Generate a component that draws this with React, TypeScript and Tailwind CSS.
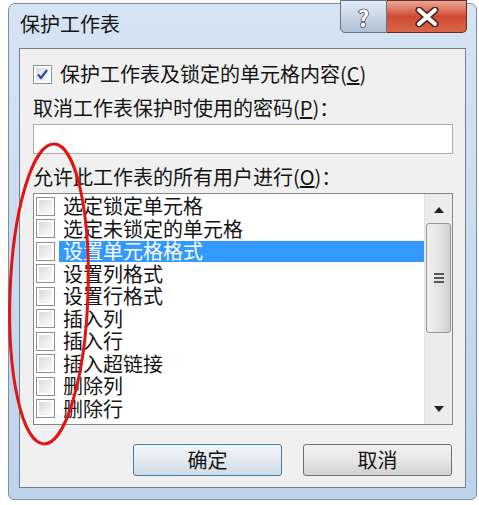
import React from 'react';

const items = [
  '选定锁定单元格',
  '选定未锁定的单元格',
  '设置单元格格式',
  '设置列格式',
  '设置行格式',
  '插入列',
  '插入行',
  '插入超链接',
  '删除列',
  '删除行',
];

const Box: React.FC<{ checked?: boolean }> = ({ checked }) => (
  <div className="w-[19px] h-[19px] shrink-0 border border-[#8e8f8f] bg-white p-[2px]">
    <div className="w-full h-full bg-gradient-to-br from-[#d9d9d9] via-[#ececec] to-[#fbfbfb] flex items-center justify-center">
      {checked && (
        <svg width="13" height="13" viewBox="0 0 13 13">
          <path d="M2 6.5 L5 10 L11 2" fill="none" stroke="#2a4f9a" strokeWidth="2.2" />
        </svg>
      )}
    </div>
  </div>
);

export default function App() {
  return (
    <div
      className="relative w-[479px] h-[505px] bg-white overflow-hidden text-[#141414]"
      style={{ fontFamily: '"Noto Sans CJK SC", "Liberation Sans", sans-serif' }}
    >
      <div className="ml-[8px] mt-[3px] w-[469px] h-[497px] rounded-t-[7px] rounded-b-[6px] border border-[#7b8ea3] bg-gradient-to-b from-[#d6e4f3] via-[#c9dcef] to-[#bdd3ea] flex flex-col">
        {/* title bar */}
        <div className="h-[44px] flex items-start">
          <div className="pl-[11px] pt-[6px] text-[20px] leading-[28px]">保护工作表</div>
          <div className="ml-auto mr-[9px] -mt-[4px] flex">
            <div className="w-[47px] h-[33px] rounded-bl-[5px] border border-[#5f7691] bg-gradient-to-b from-[#e3ebf4] via-[#c9d6e5] to-[#aebfd3] flex items-center justify-center">
              <span className="text-[22px] font-bold leading-none text-white [-webkit-text-stroke:1.5px_#3f4f62] [paint-order:stroke_fill]">?</span>
            </div>
            <div className="w-[80px] h-[33px] rounded-br-[5px] border border-l-0 border-[#6e2a22] bg-gradient-to-b from-[#e9a796] via-[#cf4a31] to-[#d9674b] flex items-center justify-center">
              <svg width="28" height="20" viewBox="0 0 28 20">
                <path d="M6 3 L22 17 M22 3 L6 17" stroke="#4a2620" strokeWidth="7" strokeLinecap="round" />
                <path d="M6 3 L22 17 M22 3 L6 17" stroke="#ffffff" strokeWidth="4" strokeLinecap="round" />
              </svg>
            </div>
          </div>
        </div>

        {/* client area */}
        <div className="mx-[10px] mb-[11px] flex-1 border border-[#6f7d8c] bg-[#f0f0f0] px-[13px] flex flex-col">
          <div className="mt-[14px] h-[22px] flex items-center gap-[8px]">
            <Box checked />
            <span className="text-[20px] leading-[22px]">保护工作表及锁定的单元格内容(<u>C</u>)</span>
          </div>
          <div className="mt-[12px] h-[22px] text-[20px] leading-[22px]">
            取消工作表保护时使用的密码(<u>P</u>)：
          </div>
          <div className="mt-[5px] h-[30px] w-[420px] border border-[#abadb3] bg-white" />
          <div className="mt-[12px] h-[22px] text-[20px] leading-[22px]">
            允许此工作表的所有用户进行(<u>O</u>)：
          </div>
          <div className="mt-[5px] h-[232px] w-[420px] border border-[#828790] bg-white flex">
            <div className="flex-1 pt-[1px] pl-[2px]">
              {items.map((t, i) => (
                <div key={t} className="h-[22.5px] flex items-center">
                  <Box />
                  <div
                    className={
                      'ml-[4px] flex-1 h-[21px] pl-[4px] text-[20px] leading-[20px] flex items-center ' +
                      (i === 2 ? 'bg-[#3399ff] text-white' : '')
                    }
                  >
                    {t}
                  </div>
                </div>
              ))}
            </div>
            <div className="w-[28px] bg-[#ececec] border-l border-[#e3e3e3] flex flex-col items-center">
              <svg className="mt-[13px]" width="10" height="6" viewBox="0 0 10 6">
                <path d="M0 6 L5 0 L10 6 Z" fill="#222" />
              </svg>
              <div className="mt-[10px] w-[25px] h-[110px] rounded-[3px] border border-[#969696] bg-gradient-to-r from-[#f0f0f0] via-[#e4e4e4] to-[#d0d0d0] flex flex-col items-center justify-center gap-[2px]">
                <div className="w-[10px] h-[2px] bg-[#555]" />
                <div className="w-[10px] h-[2px] bg-[#555]" />
                <div className="w-[10px] h-[2px] bg-[#555]" />
              </div>
              <svg className="mt-auto mb-[12px]" width="10" height="6" viewBox="0 0 10 6">
                <path d="M0 0 L5 6 L10 0 Z" fill="#222" />
              </svg>
            </div>
          </div>
          <div className="mt-[19px] flex justify-end gap-[21px]">
            <button className="w-[149px] h-[32px] rounded-[3px] border border-[#3c7fb1] bg-gradient-to-b from-[#f3f6f9] via-[#e3eaf0] to-[#cfdbe6] text-[20px] leading-none">
              确定
            </button>
            <button className="w-[149px] h-[32px] rounded-[3px] border border-[#707070] bg-gradient-to-b from-[#f2f2f2] via-[#e6e6e6] to-[#d2d2d2] text-[20px] leading-none">
              取消
            </button>
          </div>
        </div>
      </div>

      {/* red annotation */}
      <svg className="absolute inset-0 pointer-events-none" width="479" height="505">
        <ellipse cx="49" cy="294" rx="39" ry="150" transform="rotate(2 49 294)" fill="none" stroke="#e01515" strokeWidth="3" />
      </svg>
    </div>
  );
}
